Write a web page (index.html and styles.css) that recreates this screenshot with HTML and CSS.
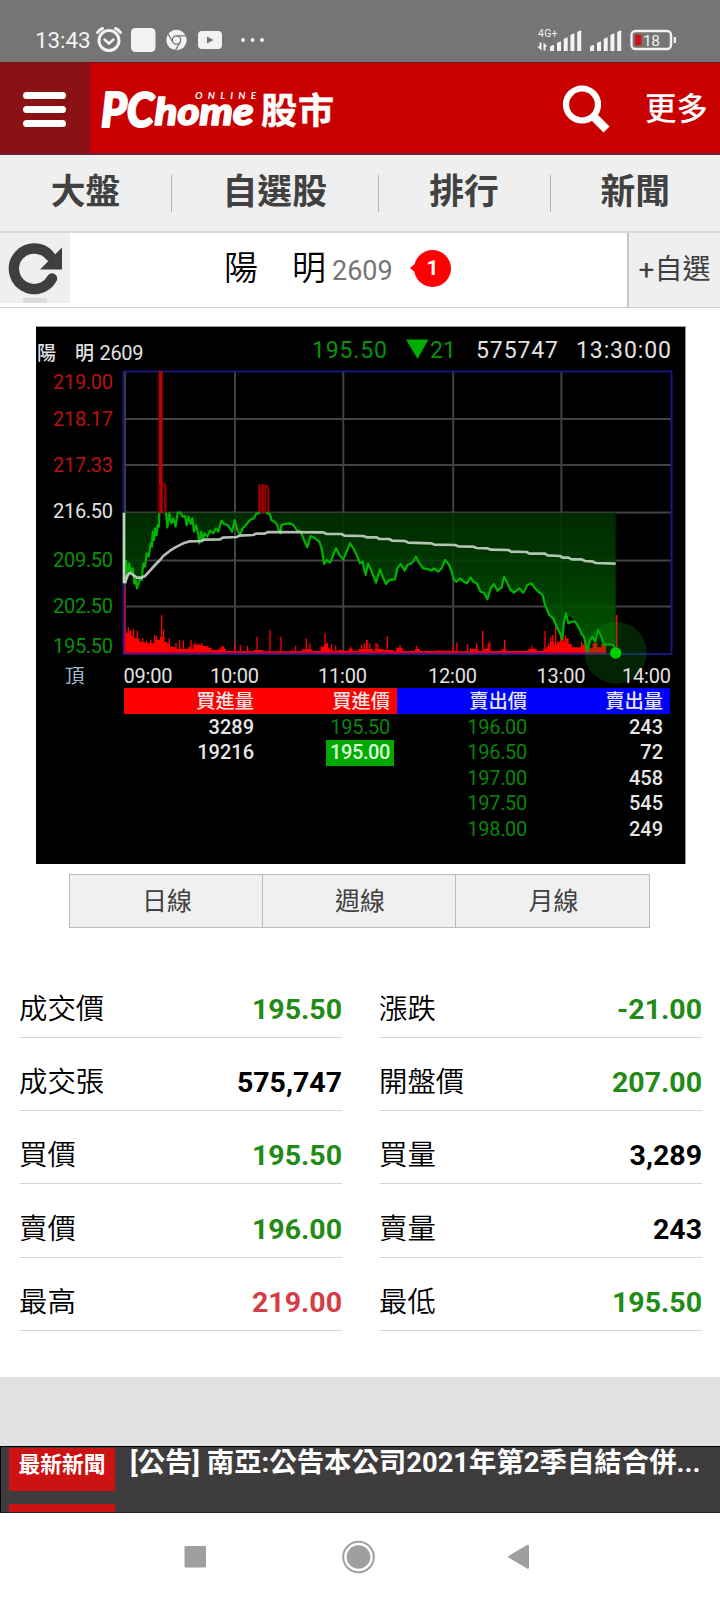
FILE: index.html
```html
<!DOCTYPE html>
<html lang="zh-Hant">
<head>
<meta charset="utf-8">
<meta name="viewport" content="width=720">
<title>PChome 股市 - 陽明 2609</title>
<link rel="stylesheet" href="styles.css">
</head>
<body>
<div class="status">
  <span class="clock">13:43</span>
  <svg class="status-left" width="178" height="32" viewBox="92 24 178 32">
    <g fill="none" stroke="#f2f2f2" stroke-width="3" stroke-linecap="round"><circle cx="109" cy="40.5" r="10"/><path d="M104.500 39.500l4.500 4 4.500-4" stroke-width="2.500"/><path d="M97.500 32.500q2-3 5-4M120.500 32.500q-2-3-5-4"/></g>
    <rect x="131" y="28" width="24.500" height="24" rx="4.500" fill="#f2f2f2"/>
    <circle cx="176.500" cy="40" r="10.200" fill="#f2f2f2"/>
    <g fill="none" stroke="#757575" stroke-width="1.200"><circle cx="176.500" cy="40" r="4.200"/><path d="M176.500 35.800h9.300M172.800 42.100l-4.600-8M180.200 42.100l-4.700 8"/></g>
    <rect x="198" y="31" width="24" height="18" rx="4" fill="#f2f2f2"/><path d="M207 36.500v7l6.500-3.500z" fill="#757575"/>
    <g fill="#f2f2f2"><circle cx="243" cy="40" r="2"/><circle cx="252.500" cy="40" r="2"/><circle cx="262" cy="40" r="2"/></g>
  </svg>
  <svg class="status-right" width="142" height="32" viewBox="536 24 142 32">
    <text x="538" y="37" font-size="10.500" textLength="19.500" fill="#f2f2f2">4G+</text>
    <g fill="#f2f2f2">
      <path d="M539.500 42.500h2v8l-4.500-4h2.500zM543.500 50.500v-8l4 4h-2v4z"/>
      <path id="bars" d="M550 46.500l3-1.500h1v6h-4zM557 43l3-1.500h1v9.500h-4zM563.700 39l3-1.500h1V51h-4zM570.400 35l3-1.500h1V51h-4zM577.200 32l3-1.500h1V51h-4z"/>
      <use href="#bars" x="40"/>
      <rect x="673.700" y="37" width="2.300" height="6"/>
    </g>
    <rect x="631.500" y="31" width="39.500" height="18" rx="4" fill="none" stroke="#f2f2f2" stroke-width="2.400"/>
    <rect x="635" y="34.500" width="6.500" height="11" rx="1" fill="#d01218"/>
    <text x="643" y="46" font-size="15.500" textLength="17" fill="#f2f2f2">18</text>
  </svg>
</div>

<header class="topbar">
  <button class="menu" aria-label="menu"><i></i><i></i><i></i></button>
  <svg class="logo" width="240" height="60" viewBox="96 80 240 60">
    <g fill="#fff" font-family="Lato, sans-serif" font-weight="900" font-style="italic" stroke="#fff" stroke-linejoin="round">
      <text x="101" y="126.500" font-size="47" textLength="53" lengthAdjust="spacingAndGlyphs" stroke-width="2">PC</text>
      <text x="154.500" y="125" font-size="38" textLength="99" lengthAdjust="spacingAndGlyphs" stroke-width="1.600">home</text>
      <text x="195" y="98.500" font-size="10" font-weight="700" textLength="61" stroke="none">ONLINE</text>
    </g>
    <text class="cjk" x="261" y="124" font-size="36" font-weight="700" textLength="73" fill="#fff" stroke="#fff" stroke-width=".5">股市</text>
  </svg>
  <svg class="search" width="52" height="52" viewBox="560 82 52 52"><g fill="none" stroke="#fff"><circle cx="582" cy="104.500" r="16" stroke-width="6.200"/><path d="M592.500 115.500l14 14" stroke-width="8.500"/></g></svg>
  <span class="more">更多</span>
</header>

<nav class="tabs"><a>大盤</a><a>自選股</a><a>排行</a><a>新聞</a></nav>

<section class="quote">
  <button class="refresh" aria-label="refresh"><svg width="70" height="70" viewBox="0 233 70 70"><path d="M52 278.500A20.300 20.300 0 1 1 50 256" fill="none" stroke="#3f3f3f" stroke-width="10.400" stroke-linecap="round"/><path d="M62 247.500v22H40z" fill="#3f3f3f"/><path d="M23 298h24v5H23z" fill="#dcdcdc"/></svg></button>
  <div class="stock"><span class="stock-name">陽　明</span><span class="code">2609</span><span class="count">1</span></div>
  <button class="add">+自選</button>
</section>

<section class="chart">
  <svg class="plot" width="649" height="361" viewBox="36 327 649 361">
    <defs><linearGradient id="fall" x1="0" y1="38" x2="0" y2="458" gradientUnits="userSpaceOnUse"><stop offset="0" stop-color="#003000"/><stop offset=".5" stop-color="#004400"/><stop offset="1" stop-color="#006400"/></linearGradient></defs>
    <g stroke="#424242" stroke-width="2"><path d="M125 372v281M235 372v281M343.300 372v281M453.200 372v281M561.400 372v281M124 419h547M124 465h547M124 512.500h547M124 560.500h547M124 606.500h547"/></g>
    <rect x="123.500" y="371.500" width="548" height="282.500" fill="none" stroke="#17177c" stroke-width="2"/>
    <g transform="translate(30 500) scale(.33333)">
      <path fill="#f00" d="M282 458V395H290V400H298V392H304V408H312V415H328V425H345V430H372V420H390V410H403V425H412V432H420V440H435V446H460V447H475V440H482V446H490V434H515V438H532V444H545V450H565V446H572V440H582V446H588V453H670V450H700V454H780V452H790V454H815V448H845V453H872V440H882V432H892V445H902V452H925V450H942V453H955V446H968V453H985V447H1028V452H1035V447H1060V450H1090V453H1098V443H1118V453H1155V447H1170V453H1220V452H1280V454H1320V446H1345V453H1360V446H1378V453H1415V448H1430V453H1480V452H1495V446H1520V453H1540V446H1550V440H1560V425H1572V435H1582V425H1605V415H1616V432H1625V442H1655V435H1670V445H1688V430H1700V442H1714V432H1728V458Z"/>
      <path stroke="#f00" stroke-width="4" d="M286 458V390M295 458V382M311 458V388M322 458V392M338 458V415M350 458V422M362 458V420M374 458V405M380 458V408M395 458V345M401 458V388M418 458V415M438 458V430M449 458V420M460 458V422M483 458V420M495 458V428M508 458V432M516 458V430M534 458V437M578 458V437M615 458V430M631 458V435M652 458V437M681 458V410M720 458V389M753 458V410M797 458V437M829 458V415M840 458V430M885 458V400M892 458V428M905 458V432M917 458V437M962 458V440M1003 458V430M1010 458V420M1020 458V430"/>
      <path stroke="#f00" stroke-width="4" d="M995 458V435M1011 458V420M1038 458V428M1043 458V432M1072 458V408M1110 458V435M1160 458V437M1225 458V450M1270 458V437M1281 458V427M1313 458V432M1340 458V430M1358 458V393M1375 458V430M1380 458V425M1424 458V420M1506 458V437M1545 458V393M1556 458V430M1562 458V412M1568 458V405M1577 458V380M1584 458V425M1592 458V405M1600 458V418M1606 458V405M1612 458V418M1655 458V425M1662 458V430M1700 458V430"/>
      <path fill="url(#fall)" fill-opacity=".88" d="M281 38V250L288 180 292 235 297 190 303 215 308 205 313 250 321 265 330 235 335 240 340 190 345 200 350 160 356 170 362 130 368 120 372 90 376 115 380 75 386 70 388 38H408L412 80 418 40 424 70 430 55 437 80 443 38H452L465 60 470 75 476 60 487 60 492 95 498 75 508 130 518 110 540 92 565 95 574 65 600 85 614 60 630 105 648 75 672 55 678 38H712L724 60 740 72 748 95 765 72 790 75 812 95 832 140 842 108 868 125 876 150 882 190 900 185 918 145 940 175 960 130 980 165 990 185 1000 190 1007 225 1014 190 1025 215 1038 248 1050 208 1068 252 1095 238 1112 192 1124 212 1158 170 1180 205 1225 215 1245 180 1272 240 1312 250 1322 232 1340 250 1372 298 1392 252 1402 270 1415 262 1422 230 1440 268 1452 278 1505 250 1525 275 1538 285 1558 345 1597 418 1608 340 1635 365 1662 410 1672 455 1688 410 1696 425 1704 390 1722 435 1757 435V38z"/>
      <path d="M392 -387V38" stroke="#b40404" stroke-width="12"/><path d="M387-45V38" stroke="#780000" stroke-width="7"/><path d="M399-48q7-2 7 20V38" fill="none" stroke="#860000" stroke-width="9"/>
      <path d="M688-47V38M698-47V38" stroke="#c00000" stroke-width="6"/><path d="M692-45V38" stroke="#700000" stroke-width="6"/><path d="M704-38q10-14 11 12V38M706-40V38" fill="none" stroke="#960000" stroke-width="6"/>
      <path fill="none" stroke="#00b400" stroke-width="6.500" stroke-linejoin="round" d="M288 180 292 235 297 190 303 215 308 205 313 250 317 240 321 265 326 250 330 235 335 240 340 190 345 200 350 160 356 170 362 130 366 140 368 95 372 120 376 85 380 105 383 75 387 80 388 38M408 38 412 82 418 40 424 70 430 55 437 80 443 38 452 38 458 50 465 48 470 75 476 50 482 72 487 55 492 95 498 75 504 100 508 130 514 95 518 120 524 100 532 110 540 92 550 100 558 85 565 95 574 62 582 72 592 75 600 85 606 95 614 60 622 90 630 105 638 85 648 75 660 60 672 55 678 42 690 38M708 38 720 42 724 60 732 65 740 72 748 95 752 100 754 75 765 72 778 70 790 75 800 90 812 95 822 120 832 142 842 108 855 115 868 125 876 150 882 192 890 180 900 188 910 165 918 145 928 165 940 178 952 150 960 130 970 145 980 165 990 190 998 185 1003 210 1007 225 1014 190 1025 215 1038 248 1050 208 1060 235 1068 252 1078 240 1095 238 1102 205 1112 192 1124 212 1132 195 1145 190 1152 180 1158 170 1168 190 1180 205 1195 208 1205 212 1212 205 1225 215 1235 205 1245 180 1258 195 1265 215 1272 240 1280 245 1290 235 1302 245 1312 250 1322 232 1330 245 1340 250 1352 275 1362 278 1372 298 1382 265 1392 252 1402 272 1415 262 1422 230 1430 245 1440 268 1452 278 1468 265 1480 278 1492 255 1505 250 1515 265 1525 275 1538 285 1545 315 1558 345 1570 355 1580 380 1590 400 1597 418 1602 365 1608 340 1615 370 1625 365 1635 365 1645 380 1655 402 1662 410 1672 455 1680 420 1688 410 1696 425 1704 390 1712 405 1722 435 1740 433 1752 437 1757 458"/>
      <path d="M282 38V250" stroke="#b5dcb5" stroke-width="8"/><path d="M284 258V458" stroke="#b0004a" stroke-width="5"/>
      <path fill="none" stroke="#c6d4c6" stroke-opacity=".9" stroke-width="8" stroke-linejoin="round" d="M286 250 290 230 300 218 310 225 320 233 335 233 345 228 360 212 375 195 390 180 400 168 420 152 440 140 460 130 480 124 515 123 522 119 570 118 578 113 620 111 628 107 670 105 678 101 704 101 714 96 880 97 890 102 935 102 943 107 1000 108 1010 112 1040 112 1048 117 1078 117 1086 122 1125 123 1135 128 1205 130 1213 134 1275 135 1285 139 1330 140 1340 144 1372 145 1382 149 1435 150 1443 155 1490 156 1498 161 1545 161 1553 166 1590 168 1598 173 1615 173 1625 178 1655 178 1665 183 1687 184 1697 189 1757 191"/>
      <path d="M281 459H1730" stroke="#b00055" stroke-width="4"/>
      <path d="M1760 345V458" stroke="#d81800" stroke-width="5"/>
      <circle cx="1757" cy="458" r="93" fill="#0a8a0a" fill-opacity=".26"/><circle cx="1757" cy="459" r="17" fill="#00d000"/>
    </g>
    <g class="axis">
      <text class="w cjk" x="37" y="359.500" font-size="19">陽　明</text><text class="w" x="99.500" y="359.500" textLength="44">2609</text>
      <g class="big"><text class="g" x="312" y="357.500" textLength="75">195.50</text><text class="g" x="430" y="357.500" textLength="26">21</text><text class="w" x="476" y="357.500" textLength="82">575747</text><text class="w" x="576" y="357.500" textLength="95">13:30:00</text></g>
      <path d="M406 339.500h22.500l-11 19.500z" fill="#00ae00"/>
      <g class="r"><text x="53" y="389.300" textLength="60">219.00</text><text x="53" y="426" textLength="60">218.17</text><text x="53" y="471.700" textLength="60">217.33</text></g>
      <text class="w" x="53" y="517.500" textLength="60">216.50</text>
      <g class="g"><text x="53" y="566.700" textLength="60">209.50</text><text x="53" y="612.500" textLength="60">202.50</text><text x="53" y="653" textLength="60">195.50</text></g>
      <text class="cjk" x="65" y="682.500" font-size="19.500" fill="#9db9cf">頂</text>
      <g class="w"><text x="123.500" y="682.500" textLength="49">09:00</text><text x="210" y="682.500" textLength="49">10:00</text><text x="318" y="682.500" textLength="49">11:00</text><text x="428" y="682.500" textLength="49">12:00</text><text x="536.500" y="682.500" textLength="49">13:00</text><text x="622" y="682.500" textLength="49">14:00</text></g>
    </g>
  </svg>
  <div class="book">
    <div class="row head"><span class="bid c1">買進量</span><span class="bid c2">買進價</span><span class="ask c3">賣出價</span><span class="ask c4">賣出量</span></div>
    <div class="row"><span class="c1">3289</span><span class="c2 price">195.50</span><span class="c3 price">196.00</span><span class="c4">243</span></div>
    <div class="row"><span class="c1">19216</span><span class="c2 price"><b class="hit">195.00</b></span><span class="c3 price">196.50</span><span class="c4">72</span></div>
    <div class="row"><span class="c1"></span><span class="c2"></span><span class="c3 price">197.00</span><span class="c4">458</span></div>
    <div class="row"><span class="c1"></span><span class="c2"></span><span class="c3 price">197.50</span><span class="c4">545</span></div>
    <div class="row last"><span class="c1"></span><span class="c2"></span><span class="c3 price">198.00</span><span class="c4">249</span></div>
  </div>
</section>

<div class="periods"><button>日線</button><button>週線</button><button>月線</button></div>

<dl class="stats">
  <div><dt>成交價</dt><dd class="down">195.50</dd></div><div><dt>漲跌</dt><dd class="down">-21.00</dd></div>
  <div><dt>成交張</dt><dd>575,747</dd></div><div><dt>開盤價</dt><dd class="down">207.00</dd></div>
  <div><dt>買價</dt><dd class="down">195.50</dd></div><div><dt>買量</dt><dd>3,289</dd></div>
  <div><dt>賣價</dt><dd class="down">196.00</dd></div><div><dt>賣量</dt><dd>243</dd></div>
  <div><dt>最高</dt><dd class="up">219.00</dd></div><div><dt>最低</dt><dd class="down">195.50</dd></div>
</dl>

<div class="band"></div>
<section class="news">
  <div class="tags"><span class="tag">最新新聞</span><span class="tag next"></span></div>
  <a class="headline">[公告] 南亞:公告本公司2021年第2季自結合併...</a>
</section>

<footer class="sysnav">
  <svg width="720" height="87" viewBox="0 1513 720 87"><g fill="#9f9f9f"><rect x="184.500" y="1546" width="21.500" height="21.500" rx="1"/><circle cx="358.500" cy="1557" r="11.800"/><path d="M508.500 1556l18.500-11q2-1 2 1v21.500q0 2-2 1l-18.500-11q-1-.7 0-1.500z"/></g><circle cx="358.500" cy="1557" r="15.300" fill="none" stroke="#9f9f9f" stroke-width="2"/></svg>
</footer>
</body>
</html>
```

FILE: styles.css
```css
* { box-sizing: border-box; }
body { margin: 0; width: 720px; height: 1600px; overflow: hidden; background: #fff; font-family: Roboto, "Noto Sans CJK TC", sans-serif; color: #000; display: flex; flex-direction: column; }
body > * { flex-shrink: 0; }
button { font: inherit; border: 0; padding: 0; margin: 0; background: none; color: inherit; }
svg { display: block; flex-shrink: 0; }
.cjk { font-family: "Noto Sans CJK TC", sans-serif; }

.status { height: 62px; background: #757575; display: flex; padding: 24px 42px 0 35px; color: #f2f2f2; }
.clock { width: 57px; font-size: 22.5px; line-height: 33px; font-weight: 450; letter-spacing: -0.1px; }
.status-right { margin-left: auto; }

.topbar { height: 93px; background: #c80000; border-top: 1px solid #6e1a1a; border-bottom: 2px solid #6d2438; display: flex; align-items: center; color: #fff; }
.menu { width: 90px; height: 90px; background: #8a1214; display: flex; flex-direction: column; align-items: center; justify-content: center; gap: 6.500px; padding: 3px 1px 0 0; }
.menu i { width: 43px; height: 7.200px; border-radius: 4px; background: #fff; }
.logo { margin: 3px 0 0 6px; }
.search { margin-left: 224px; }
.more { margin: 4px 0 0 17px; padding-left: 15px; font-size: 31.500px; line-height: 44px; font-weight: 500; border-left: 1px solid #bb0000; white-space: nowrap; }

.tabs { height: 78px; background: #efefef; border-bottom: 2px solid #d9d9d9; display: grid; grid-template-columns: 172px 206.500px 172px 169.500px; padding-top: 20px; }
.tabs a { height: 37px; line-height: 35px; text-align: center; font-size: 34.800px; font-weight: 700; color: #414141; border-right: 1.500px solid #b4b4b4; }
.tabs a:last-child { border-right: 0; }

.quote { height: 75px; border-bottom: 1px solid #d0d0d0; display: flex; }
.refresh { width: 70px; height: 70px; background: #efefef; }
.stock { width: 557px; display: flex; align-items: center; padding-left: 154px; }
.stock-name { font-size: 34px; line-height: 50px; margin-top: -4px; width: 104px; font-weight: 350; white-space: nowrap; }
.code { font-size: 27px; color: #757575; margin: 1px 22px 0 4px; width: 60px; }
.count { position: relative; width: 37px; height: 37px; border-radius: 50%; background: #f00; color: #fff; text-align: center; font-size: 21px; line-height: 36px; font-weight: 700; margin-top: -4px; }
.count::before { content: ""; position: absolute; left: -4px; top: 12px; border-right: 7px solid #f00; border-top: 6.500px solid transparent; border-bottom: 6.500px solid transparent; }
.add { flex: 1; border-left: 2px solid #c6c6c6; background: #efefef; color: #3e3e3e; font-size: 28px; line-height: 70px; white-space: nowrap; }

.chart { width: 650px; height: 538px; margin: 18px 0 0 36px; background: #000; border-top: 1px solid #9a9f9a; border-right: 1px solid #9a9a9a; }
.axis { font-size: 20px; }
.big { font-size: 23px; }
.w { fill: #e2e2e2; font-weight: 450; }
.r { fill: #b81212; }
.g { fill: #0a910a; }
.book { width: 546px; margin-left: 88px; font-size: 20px; color: #e6e6e6; font-weight: 500; }
.row { display: grid; grid-template-columns: 137px 136px 136px 137px; height: 25.600px; line-height: 25.500px; text-align: right; }
.row.head { font-size: 19.300px; height: 25.600px; margin-bottom: 1px; }
.row.head span { height: 25.600px; line-height: 27.500px; }
.row.last { line-height: 24px; }
.bid { background: #f00; }
.ask { background: #00f; }
.c1, .c2, .c3, .c4 { padding-right: 7px; white-space: nowrap; }
.c3 { padding-right: 6px; }
.price { color: #0a850a; font-weight: 400; letter-spacing: -0.3px; }
.hit { display: inline-block; font-weight: 500; color: #d9ffd9; background: #00a800; margin-right: -4px; padding: 0 4px 0 4px; height: 25.600px; letter-spacing: -0.4px; }

.periods { width: 581px; height: 54px; margin: 10px 0 0 69px; display: grid; grid-template-columns: 193px 193px 193px; border: 1px solid #bcbcbc; background: #f0f0f0; }
.periods button { font-size: 25px; line-height: 53px; padding-left: 2px; color: #414141; border-right: 1px solid #bcbcbc; white-space: nowrap; }
.periods button:last-child { border-right: 0; }

.stats { margin: 36.500px 18px 0 19px; display: grid; grid-template-columns: 323px 323px; column-gap: 37px; }
.stats div { height: 73.330px; display: flex; justify-content: space-between; align-items: flex-end; border-bottom: 1.500px solid #d8d8d8; padding-bottom: 6px; }
.stats dt { font-size: 28.400px; line-height: 42px; font-weight: 350; }
.stats dd { margin: 0; font-size: 28.500px; line-height: 42px; font-weight: 700; }
.down { color: #228b16; }
.up { color: #d63c46; }

.band { height: 69px; margin-top: auto; background: #e1e1e1; }
.news { height: 67px; background: #3e3c3c; border-top: 1px solid #000; border-left: 1px solid #000; border-bottom: 1px solid #222; display: flex; overflow: hidden; padding: 1px 0 0 8px; color: #fff; font-weight: 700; }
.tags { width: 106px; display: flex; flex-direction: column; gap: 12.500px; }
.tag { height: 43px; flex-shrink: 0; background: #cc1212; font-size: 21.800px; line-height: 33px; text-align: center; white-space: nowrap; }
.headline { margin-left: 15px; font-size: 27.400px; line-height: 31px; white-space: nowrap; }
.sysnav { height: 87px; background: #fff; }
```
